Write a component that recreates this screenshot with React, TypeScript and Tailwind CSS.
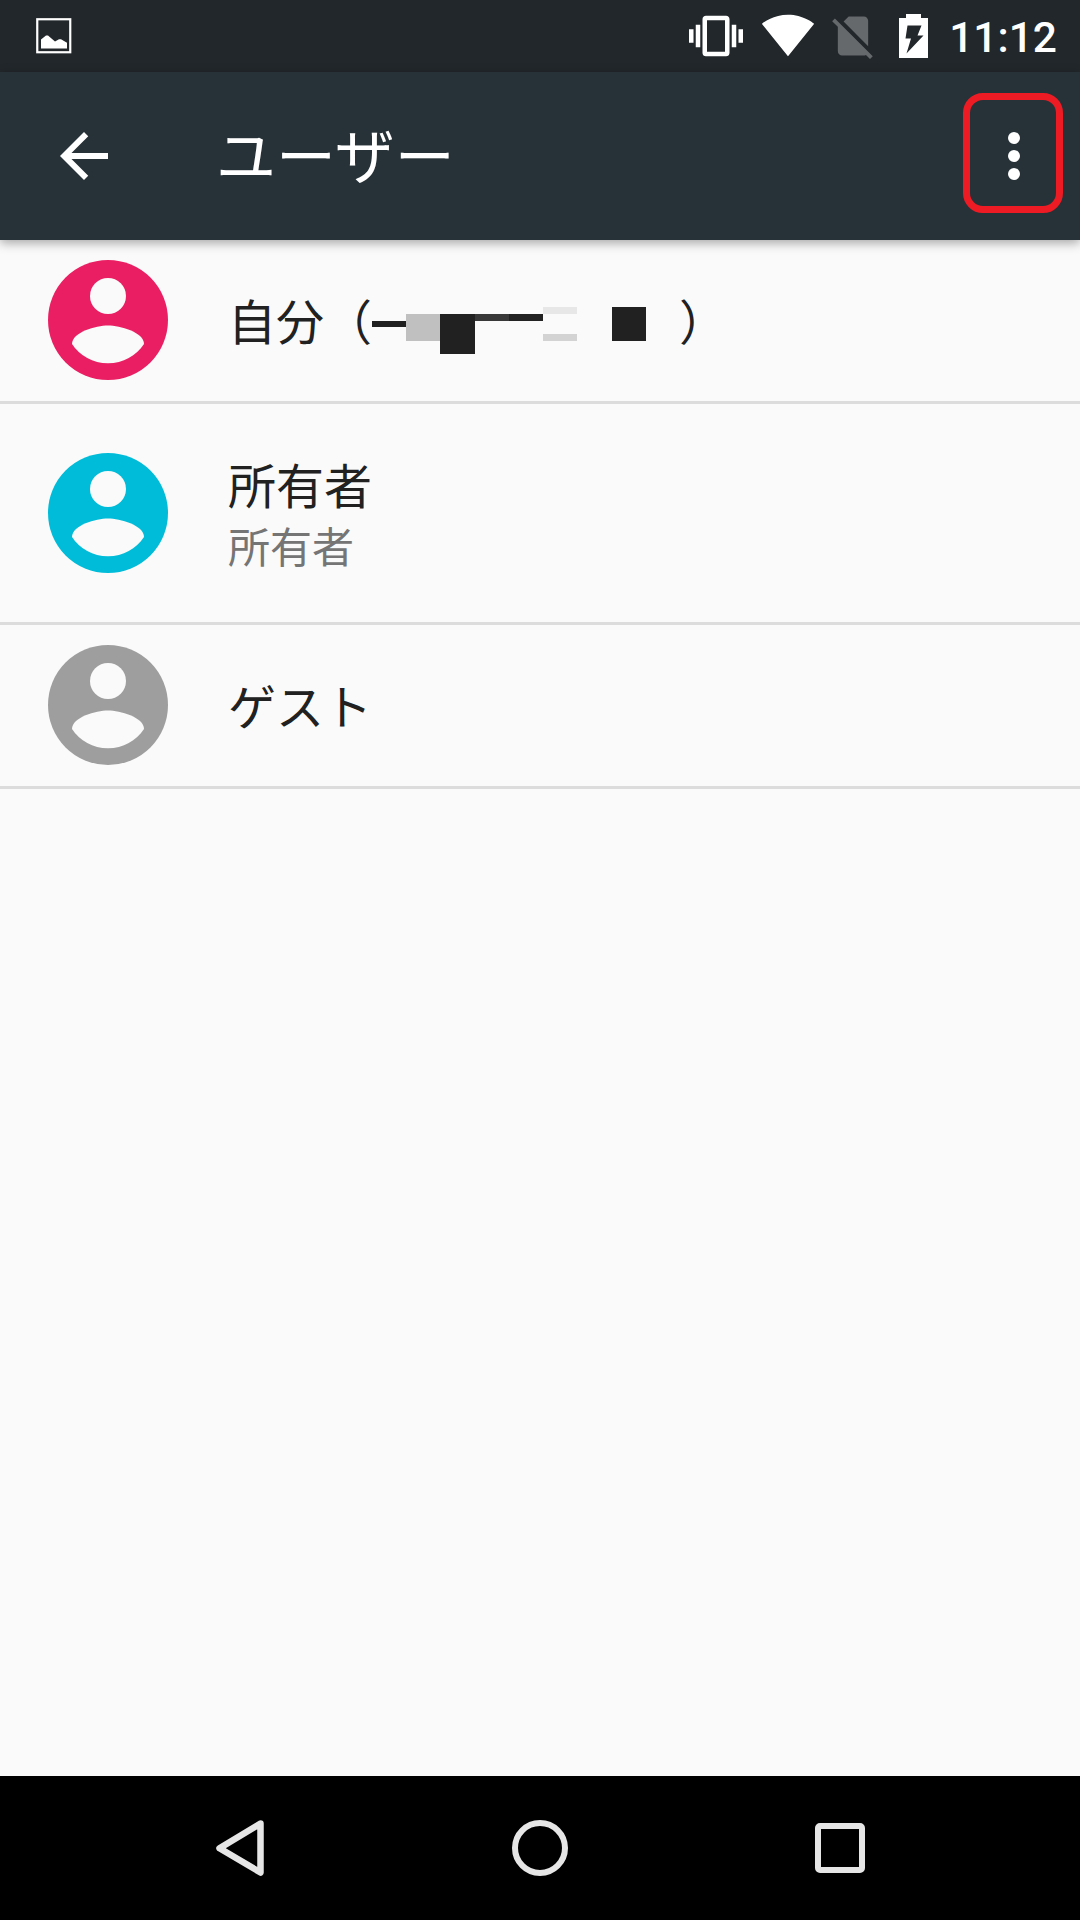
import type { ReactNode } from 'react';
import clsx from 'clsx';

function StatusBar() {
  return (
    <div className="flex h-[72px] shrink-0 items-center justify-between bg-[#22272b] pl-9 pr-[23px] text-white">
      <svg className="size-9" viewBox="0 0 36 36" fill="none">
        <rect x="1.25" y="1.25" width="33" height="33" stroke="currentColor" strokeWidth="2.2" />
        <path d="M5 30.5V21.5L10 17.5h2L19 23.5l4-2.2h2l6 3.5v5.7z" fill="currentColor" />
      </svg>

      <div className="flex items-center">
        <svg className="size-[54px]" viewBox="0 0 24 24" fill="currentColor">
          <path d="M0 15h2V9H0v6zm3 2h2V7H3v10zm19-8v6h2V9h-2zm-3 8h2V7h-2v10zM16.5 3h-9C6.67 3 6 3.67 6 4.5v15c0 .83.67 1.5 1.5 1.5h9c.83 0 1.5-.67 1.5-1.5v-15c0-.83-.67-1.5-1.5-1.5zM16 19H8V5h8v14z" />
        </svg>
        <svg className="mb-[2px] ml-[18px] size-[54px]" viewBox="0 0 24 24" fill="currentColor">
          <path d="M12.01 21.49 23.64 7c-.45-.34-4.93-4-11.64-4C5.28 3 .81 6.66.36 7l11.63 14.49.01.01.01-.01z" />
        </svg>
        <svg className="ml-[12px] size-[52px] text-[#65696c]" viewBox="0 0 24 24" fill="currentColor">
          <path d="M18.99 5c0-1.1-.89-2-1.99-2h-7L7.66 5.34 19 16.68 18.99 5zM3.65 3.88 2.38 5.15 5 7.77V19c0 1.1.9 2 2 2h10.01c.35 0 .67-.1.96-.26l1.88 1.88 1.27-1.27L3.65 3.88z" />
        </svg>
        <svg className="ml-5 h-11 w-[29px]" viewBox="0 0 29 44" fill="currentColor">
          <path
            fillRule="evenodd"
            d="M7 0h15v4h7v40H0V4h7zM8.5 11.5 6.5 24.5h5.5L7.5 39.5 24.5 21.5h-6l4-10z"
          />
        </svg>
        <span className="ml-[21px] pt-[4px] font-['Roboto',sans-serif] text-[42.5px] font-medium leading-[68px]">
          11:12
        </span>
      </div>
    </div>
  );
}

function AppBar() {
  return (
    <header className="relative z-10 flex h-[168px] shrink-0 items-center bg-[#263238] pl-12 pr-[17px] text-white shadow-[0_3px_10px_rgba(0,0,0,0.34)]">
      <button type="button" aria-label="戻る" className="size-[72px]">
        <svg className="size-[72px]" viewBox="0 0 24 24" fill="currentColor">
          <path d="M20 11H7.83l5.59-5.59L12 4l-8 8 8 8 1.41-1.41L7.83 13H20v-2z" />
        </svg>
      </button>
      <h1 className="mb-[7px] ml-24 text-[60px] leading-[72px]">ユーザー</h1>
      <button
        type="button"
        aria-label="その他"
        className="mb-[6px] ml-auto flex h-[120px] w-[100px] flex-col items-center justify-center gap-[6px] rounded-[20px] border-[7px] border-[#ed1c24] pl-[2px] pt-[6px]"
      >
        <span className="size-3 rounded-full bg-white" />
        <span className="size-3 rounded-full bg-white" />
        <span className="size-3 rounded-full bg-white" />
      </button>
    </header>
  );
}

function Avatar({ className }: { className: string }) {
  return (
    <svg className={clsx('size-[120px] shrink-0', className)} viewBox="2 2 20 20">
      <circle cx="12" cy="12" r="10" fill="currentColor" />
      <circle cx="12" cy="8" r="3" fill="#fafafa" />
      <path
        d="M12 19.2c-2.5 0-4.71-1.28-6-3.22.03-1.99 4-3.08 6-3.08 1.99 0 5.97 1.09 6 3.08-1.29 1.94-3.5 3.22-6 3.22z"
        fill="#fafafa"
      />
    </svg>
  );
}

// Pixelated blocks that hide the account name
function MaskedName() {
  return (
    <span className="mt-[18px] flex h-[47px] w-[307px] items-start">
      <span className="mt-[14px] h-[6px] w-[34px] bg-[#202020]" />
      <span className="mt-[7px] h-[27px] w-[34px] bg-[#c0c0c0]" />
      <span className="mt-[7px] h-[40px] w-[35px] bg-[#212121]" />
      <span className="mt-[7px] h-[7px] w-[34px] bg-[#383838]" />
      <span className="mt-[7px] h-[7px] w-[34px] bg-[#222222]" />
      <span className="h-[34px] w-[34px] border-b-[7px] border-t-[7px] border-b-[#d3d3d3] border-t-[#e7e7e7]" />
      <span className="ml-[35px] h-[34px] w-[34px] bg-[#212121]" />
    </span>
  );
}

interface UserRowProps {
  color: string;
  className: string;
  children: ReactNode;
}

function UserRow({ color, className, children }: UserRowProps) {
  return (
    <li className={clsx('flex items-center border-b-[3px] border-[#dcdcdc] pl-12', className)}>
      <Avatar className={color} />
      <div className="ml-[60px] text-[48px] leading-[60px] text-[#212121]">{children}</div>
    </li>
  );
}

function NavBar() {
  return (
    <nav className="flex h-[144px] shrink-0 items-center justify-center bg-black text-[#e6e6e6]">
      <div className="flex w-[300px] justify-center">
        <svg className="size-[60px]" viewBox="0 0 60 60" fill="none" stroke="currentColor">
          <path d="M50.5 5.5 9.5 30.3 50.5 54.5z" strokeWidth="6.5" strokeLinejoin="round" />
        </svg>
      </div>
      <div className="flex w-[300px] justify-center">
        <span className="size-14 rounded-full border-[6px] border-current" />
      </div>
      <div className="flex w-[300px] justify-center">
        <span className="size-[50px] rounded-[5px] border-[6px] border-current" />
      </div>
    </nav>
  );
}

export default function App() {
  return (
    <div className="flex h-[1920px] w-[1080px] flex-col overflow-hidden bg-[#fafafa] font-['Noto_Sans_CJK_JP',sans-serif]">
      <StatusBar />
      <AppBar />
      <ul className="flex-1">
        <UserRow color="text-[#e91e63]" className="h-[164px] pb-px">
          <div className="mb-0.5 flex h-[60px] items-start">
            <span>自分（</span>
            <MaskedName />
            <span>）</span>
          </div>
        </UserRow>
        <UserRow color="text-[#00bcd8]" className="h-[221px]">
          <p>所有者</p>
          <p className="-mb-0.5 mt-0.5 text-[42px] text-[#757575]">所有者</p>
        </UserRow>
        <UserRow color="text-[#9e9e9e]" className="h-[164px] pb-px">
          <p className="mb-0.5">ゲスト</p>
        </UserRow>
      </ul>
      <NavBar />
    </div>
  );
}
